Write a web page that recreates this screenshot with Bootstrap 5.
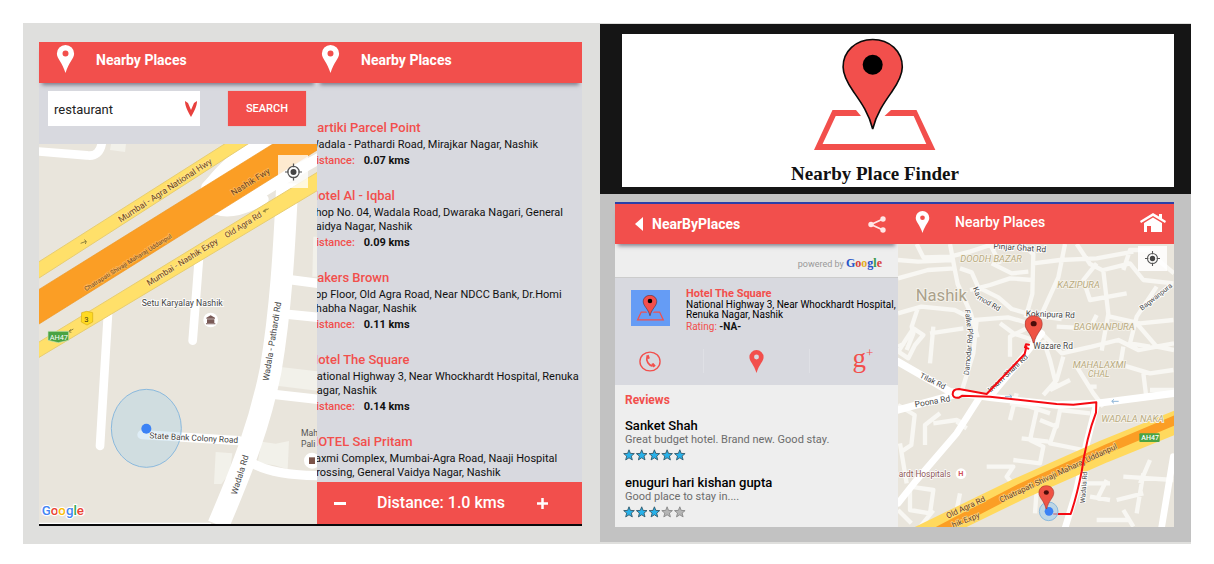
<!DOCTYPE html>
<html lang="en">
<head>
<meta charset="utf-8">
<meta name="viewport" content="width=device-width, initial-scale=1">
<title>Nearby Place Finder</title>
<link href="https://cdn.jsdelivr.net/npm/bootstrap@5.3.0/dist/css/bootstrap.min.css" rel="stylesheet">
<style>
:root { --red: #f24f4c; --panel: #d8d9df; }
body { font-family: Roboto, "Liberation Sans", sans-serif; color: #111; background: #fff; padding: 23px 23px 20px; line-height: 1.2; }
.board { display: grid; grid-template-columns: 577fr 591fr; background: #dfdfdd; }
.board > * { min-width: 0; }
.stage-left { padding: 19px 18px 18px 16px; }
.duo { display: grid; grid-template-columns: 278fr 265fr; border-bottom: 2px solid #0a0a0c; background: var(--panel); }
.duo > *, .pair > * { min-width: 0; }
.appbar { background: var(--red); color: #fff; height: 41px; display: flex; align-items: center; position: relative; }
.appbar.dropped { box-shadow: 0 5px 4px -3px rgba(60,60,80,.6); }
.appbar h2 { margin: 0; }
.duo .appbar h2 { font-size: 14px; font-weight: 700; line-height: 20px; padding-bottom: 5px; }
.duo .appbar { padding-left: 16px; gap: 20px; }
.duo .list-side .appbar { padding-left: 3px; }
.search-row { height: 61px; padding: 8px 11px 0 9px; }
.kind { position: relative; width: 152px; }
.kind select { width: 100%; height: 35px; border: 0; border-radius: 0; background: #fff; padding: 2px 6px 0; font-size: 13px; color: #222; appearance: none; }
.kind svg { position: absolute; right: 3px; top: 10px; pointer-events: none; }
.btn-search { width: 78px; height: 35px; border: 0; border-radius: 0; background: var(--red); color: #fff; font-size: 11px; font-weight: 500; padding: 0; box-shadow: 0 0 1px #e8999a; }
.mapwrap { position: relative; }
.mapwrap > svg { display: block; width: 100%; height: auto; }
.locate { position: absolute; border: 0; padding: 0; background: rgba(255,255,255,.78); display: flex; align-items: center; justify-content: center; }
.mapwrap .locate.tall { right: 9px; top: 11px; width: 30px; height: 33px; }
.mapwrap .locate.wide { right: 7px; top: 2px; width: 29px; height: 25px; background: rgba(255,255,255,.85); }
.list-side { display: flex; flex-direction: column; overflow: hidden; }
.places { list-style: none; margin: 0 0 0 -8px; padding: 35px 0 0; flex: 1; }
.places li { margin-bottom: 16px; }
.places li:last-child { margin-bottom: 0; }
.places h3 { font-size: 13px; font-weight: 500; line-height: 20px; margin: 0; color: var(--red); }
.places p { font-size: 11px; line-height: 14px; margin: 0; white-space: nowrap; }
.places .away { line-height: 18px; color: var(--red); font-weight: 500; }
.away b { color: #111; margin-left: 6px; font-weight: 700; }
.range { height: 42px; background: var(--red); color: #fff; font-size: 16px; font-weight: 500; display: flex; align-items: center; justify-content: space-between; padding: 0 33px 0 16px; }
.range button, .appbar button { border: 0; background: none; color: #fff; padding: 0; display: flex; }
.brand-block { background: #151515; padding: 10px 17px 7px 22px; margin-top: 1px; }
.brand-face { background: #fff; height: 153px; display: flex; justify-content: center; }
.brand-inner { text-align: center; padding-right: 46px; padding-top: 4px; }
.brand-inner svg { display: block; margin: 0 auto; }
.brand-inner h1 { font: 700 19px/24px "Liberation Serif", serif; margin: 10px 0 0; color: #111; }
.stage-right { background: #c2c2c2; padding: 8px 17px 15px 15px; margin-bottom: 2px; }
.pair { display: grid; grid-template-columns: 283fr 276fr; border-top: 2px solid #2b3fa8; background: #eee; }
.pair .appbar { height: 40px; }
.pair .appbar h2 { font-size: 14px; line-height: 18px; font-weight: 700; }
.pair .map-side .appbar h2 { font-weight: 500; padding-bottom: 4px; }
.powered { height: 33px; padding: 8px 16px 0 0; font-size: 9px; color: #999; line-height: 22px; text-align: right; }
.powered .goo { font: 700 12px/22px "Liberation Serif", serif; }
.detail { background: var(--panel); height: 108px; padding: 9px 0 0 16px; border-top: 1px solid #ccc; }
.thumb { width: 39px; height: 36px; background: #659cf5; display: flex; align-items: center; justify-content: center; margin-top: 3px; }
.detail .info { margin-left: 16px; font-size: 10px; line-height: 10px; white-space: nowrap; }
.info h3 { font-size: 11px; line-height: 13px; margin: 0; color: var(--red); font-weight: 700; }
.info p { margin: 0; font-weight: 400; line-height: 10px; color: #000; }
.info .rate { line-height: 14px; color: var(--red); }
.info .rate b { color: #111; }
.acts { display: grid; grid-template-columns: 88fr 106fr 89fr; margin: 15px 0 0 -16px; }
.acts button { border: 0; background: none; color: var(--red); height: 24px; padding: 0; display: flex; justify-content: center; align-items: center; }
.acts button:first-child { padding-right: 18px; }
.acts button:last-child { padding-left: 18px; }
.acts button + button { border-left: 1px solid #dfe0e5; }
.gplus { font: 400 27px/20px "Liberation Serif", serif; padding-bottom: 6px; }
.gplus sup { font-size: 13px; line-height: 0; top: -10px; }
.reviews { padding: 7px 10px 0; }
.reviews h3 { font-size: 12px; line-height: 16px; color: var(--red); font-weight: 700; margin: 0 0 11px; }
.review { margin-bottom: 15px; }
.review h4 { font-size: 13px; line-height: 14px; font-weight: 500; margin: 0; color: #000; }
.review p { font-size: 11px; line-height: 14px; color: #6c6c6c; margin: 0; }
.review svg { display: block; margin: 2px 0 0 -2px; }
text { font-family: Roboto, "Liberation Sans", sans-serif; }
</style>
</head>
<body>
<svg width="0" height="0" class="position-absolute" aria-hidden="true">
  <defs>
    <symbol id="pin" viewBox="0 0 18 28"><path fill="currentColor" fill-rule="evenodd" d="M9 0a8.6 8.6 0 0 1 8.600 8.800c0 5-5.200 8.200-8.600 19.200C5.600 17 .4 13.800.4 8.800A8.600 8.600 0 0 1 9 0Zm0 5.600a3 3 0 1 0 0 6 3 3 0 0 0 0-6Z"/></symbol>
    <symbol id="target" viewBox="0 0 18 18"><g fill="none" stroke="#555" stroke-width="1.300"><circle cx="9" cy="9" r="6"/><path d="M9 0v4M9 14v4M0 9h4M14 9h4"/></g><circle cx="9" cy="9" r="3.200" fill="#444"/></symbol>
    <symbol id="logo" viewBox="813 38 124 114">
      <path fill="#f24f4c" d="M832.500 110H856l5 6h-25.300L822.600 144h103.700l-12.600-28h-29.200l6.500-6h25.500L935.400 150H814Z"/>
      <path fill="#f24f4c" stroke="#0a0a0a" stroke-width="1.600" d="M872.700 39.500c17 0 29.600 12 29.600 27.500 0 9-5 17-10.600 25-7 10-15 21-19 37-4-16-12-27-19-37-5.600-8-10.600-16-10.600-25 0-15.500 12.600-27.500 29.600-27.500Z"/>
      <circle cx="872.700" cy="64.700" r="10" fill="#000"/>
    </symbol>
    <symbol id="star" viewBox="0 0 12 12"><path stroke-width=".9" d="m6 .8 1.400 3.600 3.900.2-3 2.500 1 3.800L6 8.800l-3.300 2.100 1-3.800-3-2.500 3.900-.2Z"/></symbol>
    <symbol id="marker" viewBox="0 0 54 84"><path fill="#ef5344" stroke="#9c2f28" stroke-width="2" d="M27 1c15 0 26 11 26 25 0 18-18 26-25 57h-2C19 52 1 44 1 26 1 12 12 1 27 1Z"/><ellipse cx="27" cy="25" rx="9" ry="8" fill="#4a0d0a"/></symbol>
  </defs>
</svg>

<main class="board">
  <section class="stage-left">
    <div class="duo">
      <div>
        <header class="appbar dropped">
          <svg width="21" height="28" class="mb-2"><use href="#pin"/></svg>
          <h2>Nearby Places</h2>
        </header>
        <form class="search-row d-flex justify-content-between align-items-start">
          <div class="kind">
            <select aria-label="Kind of place"><option>restaurant</option></select>
            <svg width="12" height="16" viewBox="0 0 12 16"><path fill="#e8403d" d="M0 0 3 2l3 7 3-7 3-2c0 5-3 11-6 16C3 11 0 5 0 0Z"/></svg>
          </div>
          <button type="button" class="btn-search">SEARCH</button>
        </form>
        <div class="mapwrap">
          <svg viewBox="27 12 834 1140" role="img" aria-label="Map of Mumbai Naka, Nashik">
            <path fill="#e9e5dc" d="M27 12h834v1140H27z"/>
            <path fill="#f2f1ea" d="M243 12h45l-3 24-45-6ZM745 680l116 14v58l-132-16ZM557 936l50 4-8 60-25 32h-22ZM695 905l42 6 40-8-4 85-40-12-50-8ZM850 290h11v120h-14Z"/>
            <g fill="none" stroke="#fff" stroke-linecap="round">
              <path stroke-width="26" d="m20 34 150 12q40 6 46-40M508 340l-20 262M234 520 210 918"/>
              <path stroke-width="28" d="M750 415l120 16M745 520l120 12M705 760l160 18M660 965q60 40 205 42M336 884l290 18"/>
              <path stroke-width="66" stroke-linecap="butt" d="M772 130c-10 210-20 380-50 560C690 850 640 980 565 1155"/>
              <path stroke-width="32" d="M530 140Q600 60 700 12M560 208q50 20 140-30M700 150 870 55"/>
              <path stroke-width="8" d="M20 1152h520"/>
            </g>
            <path fill="#fff" d="M510 150q30-60 130-138h90L560 130ZM550 225q50 0 130-40l181-110V40L650 150Z"/>
            <path stroke="#e7cd72" stroke-width="3" fill="#ffe06a" d="M24 367 590 8h70L24 416ZM24 608 865 95v55L24 654Z"/>
            <path stroke="#ed951f" stroke-width="2" fill="#fb9e25" d="M24 450 735 8h130v20L24 554Z"/>
            <g font-size="26" fill="#6b4322" stroke="#ffe7a0" stroke-width="5" paint-order="stroke" stroke-opacity=".6">
              <text transform="translate(272 248) rotate(-33)">Mumbai - Agra National Hwy</text>
              <text transform="translate(357 438) rotate(-32)" font-size="25">Mumbai - Nashik Expy</text>
              <text transform="translate(590 295) rotate(-32)" font-size="24">Old Agra Rd</text>
              <text transform="translate(610 168) rotate(-32)" stroke="#ffc56f">Nashik Fwy</text>
              <text transform="translate(168 454) rotate(-32)" font-size="19" stroke="#ffc56f">Chatrapati Shivaji Maharaj Uddanpul</text>
            </g>
            <g font-size="26" fill="#444" stroke="#fff" stroke-width="5" paint-order="stroke">
              <text x="335" y="498">Setu Karyalay Nashik</text>
              <text transform="translate(716 724) rotate(-81)">Wadala - Pathardi Rd</text>
              <text transform="translate(620 1066) rotate(-73)">Wadala Rd</text>
            </g>
            <g font-size="26" fill="#555"><text x="813" y="887">Mah</text><text x="813" y="921">Pali</text></g>
            <g fill="none" stroke="#8f823d" stroke-width="3"><path d="m152 310 16-6m-5-5 6 5-3 8M716 206l-16 8m8-8-8 8 8 2M130 567l-14 8m6-7-6 7 8 2"/></g>
            <path fill="#ffda22" stroke="#d7ad12" stroke-width="2" d="m155 518 15-4 18 4v28l-17 9-17-9Z"/><text x="163" y="545" font-size="23" fill="#443b14">3</text>
            <path fill="#4aa343" stroke="#c9e5b8" stroke-width="2" d="M54 574h62v27l-31 7-31-7Z"/><text x="59" y="600" font-size="22" fill="#fff">AH47</text>
            <circle cx="542" cy="540" r="22" fill="#fff"/><path fill="#795a57" d="m542 526 13 7v3h-26v-3Zm-11 12h22v11h-22Zm-3 12h28v3h-28Z"/>
            <circle cx="846" cy="962" r="24" fill="#fff"/><path fill="#7b5349" d="M837 952h18v20h-18z"/>
            <ellipse cx="349" cy="865" rx="105" ry="117" fill="#a9d0e8" fill-opacity=".38" stroke="#8ab9dd" stroke-width="3"/>
            <circle cx="349" cy="866" r="15" fill="#3b82f5"/>
            <text x="358" y="895" transform="rotate(3 358 895)" font-size="25" fill="#444" stroke="#fff" stroke-width="4" paint-order="stroke">State Bank Colony Road</text>
            <text x="35" y="1124" font-size="40" font-weight="500" stroke="#fff" stroke-width="7" paint-order="stroke"><tspan fill="#4285f4">G</tspan><tspan fill="#ea4335">o</tspan><tspan fill="#fbbc05">o</tspan><tspan fill="#4285f4">g</tspan><tspan fill="#34a853">l</tspan><tspan fill="#ea4335">e</tspan></text>
          </svg>
          <button type="button" class="locate tall" aria-label="My location"><svg width="17" height="18"><use href="#target"/></svg></button>
        </div>
      </div>
      <div class="list-side">
        <header class="appbar dropped">
          <svg width="21" height="28" class="mb-2"><use href="#pin"/></svg>
          <h2>Nearby Places</h2>
        </header>
        <ul class="places">
          <li><h3>Kartiki Parcel Point</h3><p>Wadala - Pathardi Road, Mirajkar Nagar, Nashik</p><p class="away">Distance: <b>0.07 kms</b></p></li>
          <li><h3>Hotel Al - Iqbal</h3><p>Shop No. 04, Wadala Road, Dwaraka Nagari, General<br>Vaidya Nagar, Nashik</p><p class="away">Distance: <b>0.09 kms</b></p></li>
          <li><h3>Bakers Brown</h3><p>Top Floor, Old Agra Road, Near NDCC Bank, Dr.Homi<br>Bhabha Nagar, Nashik</p><p class="away">Distance: <b>0.11 kms</b></p></li>
          <li><h3>Hotel The Square</h3><p>National Highway 3, Near Whockhardt Hospital, Renuka<br>Nagar, Nashik</p><p class="away">Distance: <b>0.14 kms</b></p></li>
          <li><h3>HOTEL Sai Pritam</h3><p>Laxmi Complex, Mumbai-Agra Road, Naaji Hospital<br>Crossing, General Vaidya Nagar, Nashik</p></li>
        </ul>
        <div class="range">
          <button type="button" aria-label="Less"><svg width="13" height="13"><path stroke="#fff" stroke-width="3" d="M1 6.500h12"/></svg></button>
          <span>Distance: 1.0 kms</span>
          <button type="button" aria-label="More"><svg width="13" height="13"><path stroke="#fff" stroke-width="2.500" d="M1 6.500h11M6.500 1v11"/></svg></button>
        </div>
      </div>
    </div>
  </section>

  <div>
    <section class="brand-block">
      <div class="brand-face">
        <div class="brand-inner">
          <svg width="124" height="114"><use href="#logo"/></svg>
          <h1>Nearby Place Finder</h1>
        </div>
      </div>
    </section>
    <section class="stage-right">
      <div class="pair">
        <div>
          <header class="appbar dropped ps-3 pe-2">
            <button type="button" class="ms-1 me-2" aria-label="Back"><svg width="9" height="14"><path fill="#fff" d="M8 0v14L0 7Z"/></svg></button>
            <h2 class="flex-grow-1">NearByPlaces</h2>
            <button type="button" class="me-1" aria-label="Share"><svg width="18" height="17" viewBox="0 0 18 17"><path stroke="#ffe5e5" stroke-width="1.800" fill="none" d="M15 3 3 8.500l12 5.500"/><g fill="#ffe5e5"><circle cx="15" cy="3" r="2.700"/><circle cx="3" cy="8.500" r="2.700"/><circle cx="15" cy="14" r="2.700"/></g></svg></button>
          </header>
          <div class="powered">powered by <span class="goo"><span style="color:#2553c7">G</span><span style="color:#d6403c">o</span><span style="color:#e2ab25">o</span><span style="color:#2553c7">g</span><span style="color:#37984a">l</span><span style="color:#d6403c">e</span></span></div>
          <section class="detail">
            <div class="d-flex align-items-start">
              <div class="thumb"><svg width="29" height="26"><use href="#logo"/></svg></div>
              <div class="info">
                <h3>Hotel The Square</h3>
                <p>National Highway 3, Near Whockhardt Hospital,<br>Renuka Nagar, Nashik</p>
                <p class="rate">Rating: <b>-NA-</b></p>
              </div>
            </div>
            <div class="acts">
              <button type="button" aria-label="Call"><svg width="22" height="21" viewBox="0 0 21 20"><ellipse cx="10.500" cy="10" rx="9.600" ry="9" fill="none" stroke="currentColor" stroke-width="1.300"/><path fill="none" stroke="currentColor" stroke-width="1.600" d="M7.600 6c-1 3.500 1.600 7.300 5.400 8.600"/><path fill="currentColor" d="m6.600 4.600 2.600-1 1.200 3.200-2 1ZM11.700 12.500l2-1 2.300 2.600-2.200 1.600Z"/></svg></button>
              <button type="button" aria-label="Show on map"><svg width="17" height="23"><use href="#pin"/></svg></button>
              <button type="button" aria-label="Google plus"><span class="gplus">g<sup>+</sup></span></button>
            </div>
          </section>
          <section class="reviews">
            <h3>Reviews</h3>
            <article class="review">
              <h4>Sanket Shah</h4><p>Great budget hotel. Brand new. Good stay.</p>
              <svg width="64" height="12" fill="#27b1ea" stroke="#31586a" role="img" aria-label="5 of 5"><use href="#star" width="12" height="12"/><use href="#star" x="12.700" width="12" height="12"/><use href="#star" x="25.400" width="12" height="12"/><use href="#star" x="38.100" width="12" height="12"/><use href="#star" x="50.800" width="12" height="12"/></svg>
            </article>
            <article class="review mb-0">
              <h4>enuguri hari kishan gupta</h4><p>Good place to stay in....</p>
              <svg width="64" height="12" fill="#27b1ea" stroke="#31586a" role="img" aria-label="3 of 5"><use href="#star" width="12" height="12"/><use href="#star" x="12.700" width="12" height="12"/><use href="#star" x="25.400" width="12" height="12"/><g fill="#b5b5b5" stroke="#888"><use href="#star" x="38.100" width="12" height="12"/><use href="#star" x="50.800" width="12" height="12"/></g></svg>
            </article>
          </section>
        </div>
        <div class="map-side">
          <header class="appbar ps-3 pe-2">
            <svg width="17" height="22" class="mb-1"><use href="#pin"/></svg>
            <h2 class="flex-grow-1 ms-4">Nearby Places</h2>
            <button type="button" class="mb-1" aria-label="Home"><svg width="26" height="19" viewBox="0 0 26 19"><path fill="#fff" d="M13 0 0 8l1 2 12-7 12 7 1-2-4-2.500V1h-3v2.600ZM4 10l9-5.500L22 10v9H11v-6H7v6H4Z"/></svg></button>
          </header>
          <div class="mapwrap">
            <svg viewBox="24 162 828 849" role="img" aria-label="Map of the route in Nashik">
              <path fill="#e9e5dc" d="M24 162h828v849H24z"/>
              <g fill="none" stroke="#f8f7f3" stroke-width="13" stroke-linejoin="round">
                <path d="M80 162l20 40 80-2 60-15 70-23M24 210l60 5 100-5M180 162l15 80 8 40 40 90 20 70M24 265l90-25 80-5M210 235l35 12 20 45 60 30 40 35 70 20 80 10M240 300l60-15 60-20 65 5M305 220l60 30 50-5M300 162l30 60M395 162l35 30-3 120-20 70M430 220l80-10 110-5 110-20M525 162l-20 100-50 110M560 162l40 60 40 20 15 130-20 110M620 220l-40 50 20 60 110-20M640 240l80-20 40 50 90 10M700 240l20-60 60 0M780 190l72 60M660 380l90 20 100-10M740 400l60 70 52 10M800 290l-60 90-20 80 60 10M24 370l70-20 100 10 60 30 100-8 70 20M85 350l-20 60 5 20-20 50M70 415l30 20-25 30-20 40-30-20 25-40ZM130 410l-10 110M120 430l100-15M24 470l20-10M260 390l-10 100-40 130M330 400l40 30 60 20M420 410l-60 30 0 60M455 430l60 60 90-20 80-20 60 30 107-20M460 450l20 60 20 80M500 410l100 5 20-40M520 500l-20 70-40 45M560 530l50 80 30 40M600 590l20 0M680 520l100 30 70-10M700 470l-10 60M760 550l10 80M780 600h72M540 570l-60 30"/>
                <path d="M24 645l50 30-10 90-30 20M150 670l-45 35 0 60M130 700l70-10 20 10M200 695l30 20M30 760l20 120M380 610l-20 80M360 640l60 10M440 660l-20 90 40 20-10 50-80-10M395 745l80 10M450 690l50 20 10-50 90 10M500 700l-20 60 100 20M480 670l-60-20M320 830h50l-20 30 20 25M210 910l-10 50 60-30M290 830h40M60 890l70 10-10 70-60-10ZM90 1011l40-50M24 960l40 40M700 860l150 10M760 850l-20 120M600 920l60 10M590 880h70M680 930l80-20M650 870l-30 60M620 990h100M700 960l30 50M440 900l-5 70M780 810l-30 70"/>
              </g>
              <g fill="none" stroke="#fff" stroke-linecap="round">
                <path stroke-width="22" d="M24 515 180 605 300 622 500 645 620 640 852 610M24 660 190 615"/>
                <path stroke-width="20" d="M270 620 200 730 80 870 24 940M620 640 590 760 560 900 525 1015M850 800 815 1011M300 620 400 500 455 430"/>
              </g>
              <g fill="none"><path stroke="#ffd95e" stroke-width="68" d="M70 1051 380 900 640 785 875 690"/><path stroke="#fb9e25" stroke-width="28" d="M110 1041 390 895 650 777 875 682"/></g>
              <g font-style="italic" font-size="26" fill="#b8aa80" stroke="#f7f4ec" stroke-width="5" paint-order="stroke">
                <text x="211" y="217" font-size="28">DOODH BAZAR</text><text x="502" y="295" font-size="28">KAZIPURA</text><text x="551" y="421" font-size="28">BAGWANPURA</text><text x="548" y="533" font-size="28">MAHALAXMI</text><text x="594" y="561">CHAL</text><text x="634" y="695" font-size="28">WADALA NAKA</text>
              </g>
              <text x="77" y="332" font-size="50" fill="#aaa18c" stroke="#f7f4ec" stroke-width="5" paint-order="stroke">Nashik</text>
              <g font-size="25" fill="#464646" stroke="#fff" stroke-width="5" paint-order="stroke">
                <text transform="translate(310 176) rotate(4)">Pinjar Ghat Rd</text>
                <text transform="translate(248 295) rotate(66)" font-size="23">Ka</text><text transform="translate(260 326) rotate(30)" font-size="22">mod Rd</text>
                <text x="407" y="379" transform="rotate(2 407 381)">Koknipura Rd</text><text x="430" y="478">Wazare Rd</text>
                <text transform="translate(224 360) rotate(82)" font-size="22">Falke Pl</text><text transform="translate(236 556) rotate(-84)" font-size="22">Damodar Rd</text>
                <text transform="translate(756 362) rotate(-38)" font-size="21">Bagwanpura</text>
                <text transform="translate(88 562) rotate(26)" font-size="23">Tilak Rd</text><text transform="translate(76 652) rotate(-10)">Poona Rd</text>
                <text transform="translate(302 608) rotate(-43)" font-size="23">Imam Shahi Rd</text>
                <text transform="translate(584 940) rotate(-85)" font-size="20">Wadala Rd</text>
              </g>
              <g font-size="26" fill="#68401f" stroke="#ffdc86" stroke-width="4" paint-order="stroke">
                <text transform="translate(173 986) rotate(-25)" font-size="24">Old Agra Rd</text>
                <text transform="translate(333 938) rotate(-25)" font-size="24">Chatrapati Shivaji Maharaj Uddanpul</text>
                <text transform="translate(190 1014) rotate(-22)" font-size="24">hik Expy</text>
              </g>
              <text x="26" y="860" font-size="25" fill="#8e5656" stroke="#fff" stroke-width="4" paint-order="stroke">ardt Hospitals</text>
              <circle cx="213" cy="851" r="16" fill="#fff"/><text x="205" y="859" font-size="22" font-weight="700" fill="#d1555b">H</text>
              <path fill="none" stroke="#8fb6d8" stroke-width="3" d="M345 620h20m-6-6 7 6-7 6M686 634h-20m6-6-7 6 7 6"/>
              <path fill="none" stroke="#f50a12" stroke-width="6" stroke-linejoin="round" stroke-linecap="round" d="M415 476 405 472 408 463 417 464M409 470 404 492 290 612 207 597Q188 597 188 613 190 625 207 623L217 617 300 620 500 642 550 644 619 637 618 668Q590 740 575 845 560 920 542 972H492"/>
              <rect x="748" y="730" width="61" height="26" rx="3" fill="#4aa343"/><text x="754" y="751" font-size="21" font-weight="500" fill="#fff">AH47</text>
              <circle cx="476" cy="964" r="28" fill="#a9d0e8" fill-opacity=".7" stroke="#8ab9dd" stroke-width="3"/><circle cx="477" cy="964" r="13" fill="#3b82f5"/>
              <use href="#marker" x="404" y="376" width="54" height="84"/><use href="#marker" x="438" y="886" width="62" height="72"/>
            </svg>
            <button type="button" class="locate wide" aria-label="My location"><svg width="17" height="15"><use href="#target"/></svg></button>
          </div>
        </div>
      </div>
    </section>
  </div>
</main>
<script src="https://cdn.jsdelivr.net/npm/bootstrap@5.3.0/dist/js/bootstrap.bundle.min.js"></script>
</body>
</html>
